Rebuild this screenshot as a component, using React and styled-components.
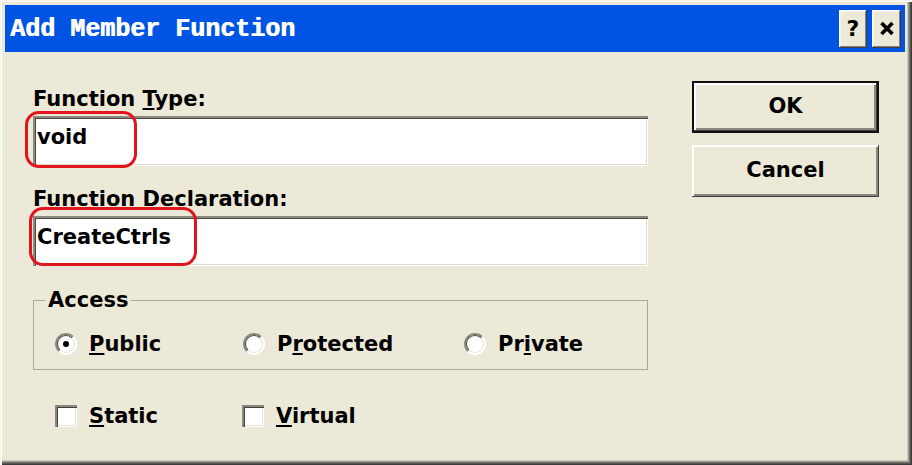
import React from "react";
import styled, { createGlobalStyle } from "styled-components";

const Global = createGlobalStyle`
  html, body { margin: 0; padding: 0; background: #ffffff; }
  body { font-family: "DejaVu Sans", "Liberation Sans", sans-serif; }
`;

const Win = styled.div`
  width: 912px;
  height: 465px;
  box-sizing: border-box;
  padding: 5px 7px 5px 5px;
  background: #ece9d8;
  display: flex;
  flex-direction: column;
  box-shadow: inset 1px 1px 0 #f4f3ee, inset 2px 2px 0 #ffffff,
    inset -1px -1px 0 #3c3c3c, inset -2px -2px 0 #55544f,
    inset -3px -3px 0 #77756c, inset -4px -4px 0 #9e9c91,
    inset -5px -5px 0 #cfccbf;
`;

const TitleBar = styled.div`
  height: 47px;
  flex: none;
  background: #0054e3;
  display: flex;
  align-items: center;
  padding: 0 4px 0 5px;
`;

const TitleText = styled.div`
  flex: 1;
  color: #ffffff;
  font-family: "Liberation Mono", "DejaVu Sans Mono", monospace;
  font-weight: bold;
  font-size: 25px;
  line-height: 30px;
  white-space: nowrap;
  padding-top: 2px;
  text-shadow: 0.7px 0 0 #ffffff;
`;

const CaptionButtons = styled.div`
  display: flex;
  gap: 5px;
`;

const CaptionButton = styled.div`
  width: ${(p) => p.$w}px;
  height: 38px;
  box-sizing: border-box;
  background: #ece9d8;
  display: flex;
  align-items: center;
  justify-content: center;
  color: #000;
  font-weight: bold;
  font-size: 22px;
  box-shadow: inset -1px -1px 0 #404040, inset 1px 1px 0 #ffffff,
    inset -2px -2px 0 #808080, inset 2px 2px 0 #f5f4ee;
`;

const Body = styled.div`
  flex: 1;
  display: flex;
  padding: 29px 26px 0 28px;
`;

const LeftCol = styled.div`
  width: 615px;
  padding-top: 6px;
  display: flex;
  flex-direction: column;
`;

const Field = styled.div`
  display: flex;
  flex-direction: column;
  gap: 5px;
  margin-top: ${(p) => p.$mt || 0}px;
`;

const Label = styled.div`
  font-weight: bold;
  font-size: 21px;
  line-height: 24px;
  color: #000;
  white-space: nowrap;
`;

const Acc = styled.u`
  text-decoration: underline;
  text-decoration-thickness: 2px;
  text-underline-offset: 2px;
`;

const EditWrap = styled.div`
  position: relative;
`;

const Edit = styled.div`
  height: 50px;
  box-sizing: border-box;
  background: #ffffff;
  padding: 9px 4px 0 4px;
  font-weight: bold;
  font-size: 21px;
  line-height: 24px;
  color: #000;
  box-shadow: inset 2px 2px 0 #8c8a80, inset 3px 3px 0 #4a4944,
    inset -1px -1px 0 #ffffff, inset -2px -2px 0 #dedbcd;
`;

const Annotation = styled.div`
  position: absolute;
  left: ${(p) => p.$l}px;
  top: ${(p) => p.$t}px;
  width: ${(p) => p.$w}px;
  height: ${(p) => p.$h}px;
  box-sizing: border-box;
  border: 3px solid #e3151c;
  border-radius: 14px;
  pointer-events: none;
`;

const Group = styled.fieldset`
  margin: 22px 0 0 0;
  padding: 20px 0 13px 0;
  border: 1px solid #aca899;
  min-inline-size: 0;
`;

const Legend = styled.legend`
  margin-left: 11px;
  padding: 0 3px;
  font-weight: bold;
  font-size: 21px;
  line-height: 24px;
  color: #000;
`;

const OptionRow = styled.div`
  display: grid;
  grid-template-columns: ${(p) => p.$cols};
  padding-left: ${(p) => p.$pl}px;
  margin-top: ${(p) => p.$mt || 0}px;
`;

const Option = styled.div`
  display: flex;
  align-items: center;
  gap: 12px;
  font-weight: bold;
  font-size: 21px;
  line-height: 24px;
  color: #000;
  white-space: nowrap;
`;

const Radio = styled.span`
  position: relative;
  width: 22px;
  height: 22px;
  box-sizing: border-box;
  border-radius: 50%;
  background: #ffffff;
  border: 2px solid;
  border-color: #8a887e #ffffff #ffffff #8a887e;
  flex: none;
  &::before {
    content: "";
    position: absolute;
    inset: 0;
    border-radius: 50%;
    border: 1px solid;
    border-color: #404040 #e6e3d6 #e6e3d6 #404040;
  }
  &::after {
    content: "";
    display: ${(p) => (p.$checked ? "block" : "none")};
    position: absolute;
    left: 50%;
    top: 50%;
    width: 6px;
    height: 6px;
    margin: -3px 0 0 -3px;
    border-radius: 50%;
    background: #000;
  }
`;

const Check = styled.span`
  width: 22px;
  height: 22px;
  box-sizing: border-box;
  background: #ffffff;
  flex: none;
  box-shadow: inset 2px 2px 0 #8a887e, inset 3px 3px 0 #404040,
    inset -1px -1px 0 #ffffff, inset -2px -2px 0 #e6e3d6;
`;

const ButtonCol = styled.div`
  margin-left: 44px;
  width: 187px;
  display: flex;
  flex-direction: column;
  gap: 12px;
`;

const PushButton = styled.div`
  height: 52px;
  box-sizing: border-box;
  background: #ece9d8;
  display: flex;
  align-items: center;
  justify-content: center;
  font-weight: bold;
  font-size: 21px;
  color: #000;
  padding-bottom: 3px;
  border: ${(p) => (p.$default ? "2px solid #101010" : "none")};
  box-shadow: inset -1px -1px 0 #404040, inset 2px 2px 0 #ffffff,
    inset -3px -3px 0 #8a887e;
`;

const CloseIcon = () => (
  <svg width="16" height="15" viewBox="0 0 16 15">
    <path d="M2.5 2 L13.5 13 M13.5 2 L2.5 13" stroke="#000" strokeWidth="3.6" strokeLinecap="butt" />
  </svg>
);

export default function App() {
  return (
    <>
      <Global />
      <Win>
        <TitleBar>
          <TitleText>Add Member Function</TitleText>
          <CaptionButtons>
            <CaptionButton $w={28}>?</CaptionButton>
            <CaptionButton $w={29}>
              <CloseIcon />
            </CaptionButton>
          </CaptionButtons>
        </TitleBar>
        <Body>
          <LeftCol>
            <Field>
              <Label>
                Function <Acc>T</Acc>ype:
              </Label>
              <EditWrap>
                <Edit>void</Edit>
                <Annotation $l={-8} $t={-5} $w={112} $h={57} />
              </EditWrap>
            </Field>
            <Field $mt={21}>
              <Label>
                Function <Acc>D</Acc>eclaration:
              </Label>
              <EditWrap>
                <Edit>CreateCtrls</Edit>
                <Annotation $l={-4} $t={-9} $w={168} $h={59} />
              </EditWrap>
            </Field>
            <Group>
              <Legend>Access</Legend>
              <OptionRow $cols="188px 221px auto" $pl={21}>
                <Option>
                  <Radio $checked />
                  <span>
                    <Acc>P</Acc>ublic
                  </span>
                </Option>
                <Option>
                  <Radio />
                  <span>
                    P<Acc>r</Acc>otected
                  </span>
                </Option>
                <Option>
                  <Radio />
                  <span>
                    Pr<Acc>i</Acc>vate
                  </span>
                </Option>
              </OptionRow>
            </Group>
            <OptionRow $cols="187px auto" $pl={22} $mt={34}>
              <Option>
                <Check />
                <span>
                  <Acc>S</Acc>tatic
                </span>
              </Option>
              <Option>
                <Check />
                <span>
                  <Acc>V</Acc>irtual
                </span>
              </Option>
            </OptionRow>
          </LeftCol>
          <ButtonCol>
            <PushButton $default>OK</PushButton>
            <PushButton>Cancel</PushButton>
          </ButtonCol>
        </Body>
      </Win>
    </>
  );
}
